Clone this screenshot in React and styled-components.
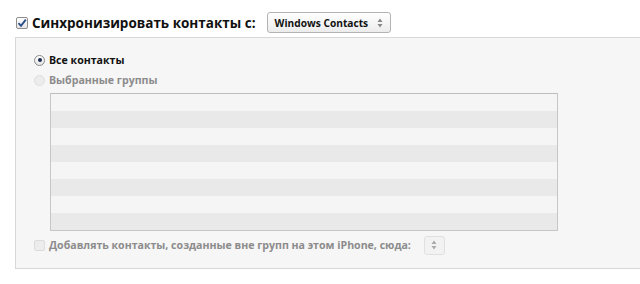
import styled, { createGlobalStyle } from 'styled-components'

const Global = createGlobalStyle`
    html, body {
        margin: 0;
        padding: 0;
        background: #ffffff;
        overflow: hidden;
    }
    body {
        font-family: "Open Sans", "Liberation Sans", sans-serif;
    }
`

const groups = Array.from({ length: 8 })

const App = () => {
    return (
        <>
            <Global />
            <Header>
                <Check checked />
                <Title>Синхронизировать контакты с:</Title>
                <Popup>
                    <span>Windows Contacts</span>
                    <Arrows />
                </Popup>
            </Header>
            <Panel>
                <Option>
                    <Radio checked />
                    <Label>Все контакты</Label>
                </Option>
                <Option>
                    <Radio disabled />
                    <Label disabled>Выбранные группы</Label>
                </Option>
                <List>
                    {groups.map((_, i) => (
                        <ListRow key={i} odd={i % 2 === 1} />
                    ))}
                </List>
                <Footer>
                    <SmallCheck />
                    <Label disabled>Добавлять контакты, созданные вне групп на этом iPhone, сюда:</Label>
                    <MiniPopup>
                        <Arrows faded />
                    </MiniPopup>
                </Footer>
            </Panel>
        </>
    )
}

export default App

const Check = ({ checked }) => (
    <CheckBox>
        {checked && (
            <svg width="10" height="10" viewBox="0 0 10 10">
                <path d="M1.5 5.2 L4 7.8 L8.8 1.6" fill="none" stroke="#2b4f8a" strokeWidth="1.9" />
            </svg>
        )}
    </CheckBox>
)

const Arrows = ({ faded }) => (
    <svg width="6" height="10" viewBox="0 0 6 10" style={{ flexShrink: 0 }}>
        <path d="M3 0.5 L5.5 4 L0.5 4 Z" fill={faded ? '#aaa' : '#888'} />
        <path d="M3 9.5 L5.5 6 L0.5 6 Z" fill={faded ? '#aaa' : '#888'} />
    </svg>
)

const Header = styled.div`
    display: flex;
    align-items: center;
    height: 21px;
    padding: 12px 0 0 16px;
`

const CheckBox = styled.div`
    width: 10px;
    height: 10px;
    border: 1px solid #8e8e8e;
    border-radius: 2px;
    background: linear-gradient(#ffffff, #e6e6e6);
    display: flex;
    align-items: center;
    justify-content: center;
    margin-right: 4px;
`

const Title = styled.span`
    font-size: 13.5px;
    font-weight: 700;
    color: #111;
    margin-right: 11px;
`

const Popup = styled.div`
    box-sizing: border-box;
    display: flex;
    align-items: center;
    justify-content: space-between;
    width: 124px;
    height: 21px;
    padding: 0 7px 0 7px;
    border: 1px solid #b3b3b3;
    border-radius: 3px;
    background: linear-gradient(#ffffff, #ececec);
    font-size: 10.2px;
    font-weight: 700;
    color: #111;
`

const Panel = styled.div`
    box-sizing: border-box;
    margin: 4px 0 0 15px;
    width: 640px;
    height: 232px;
    background: #f6f6f6;
    border: 1px solid #d8d8d8;
    border-right: none;
    padding: 12px 0 0 18px;
`

const Option = styled.div`
    display: flex;
    align-items: center;
    height: 20px;
`

const Radio = styled.div`
    box-sizing: border-box;
    width: 11px;
    height: 11px;
    border-radius: 50%;
    border: 1px solid ${p => (p.disabled ? '#dedede' : '#8a8a8a')};
    background: ${p => (p.disabled ? '#ececec' : 'linear-gradient(#ffffff, #e4e4e4)')};
    margin-right: 4px;
    position: relative;
    &::after {
        content: '';
        display: ${p => (p.checked ? 'block' : 'none')};
        position: absolute;
        left: 2.5px;
        top: 2.5px;
        width: 4px;
        height: 4px;
        border-radius: 50%;
        background: #1d2f55;
    }
`

const Label = styled.span`
    font-size: 10.6px;
    font-weight: 700;
    color: ${p => (p.disabled ? '#8c8c8c' : '#111')};
    white-space: nowrap;
`

const List = styled.div`
    width: 506px;
    margin: 3px 0 0 16px;
    border: 1px solid #c6c6c6;
    border-top-color: #bdbdbd;
`

const ListRow = styled.div`
    height: 17px;
    background: ${p => (p.odd ? '#e9e9e9' : '#f5f5f5')};
`

const Footer = styled.div`
    display: flex;
    align-items: center;
    height: 20px;
    margin-top: 4px;
`

const SmallCheck = styled.div`
    box-sizing: border-box;
    width: 11px;
    height: 11px;
    border: 1px solid #dcdcdc;
    border-radius: 2px;
    background: #ececec;
    margin-right: 4px;
`

const MiniPopup = styled.div`
    box-sizing: border-box;
    display: flex;
    align-items: center;
    justify-content: center;
    width: 21px;
    height: 19px;
    margin-left: 13px;
    border: 1px solid #e0e0e0;
    border-radius: 3px;
    background: #f2f2f2;
`
